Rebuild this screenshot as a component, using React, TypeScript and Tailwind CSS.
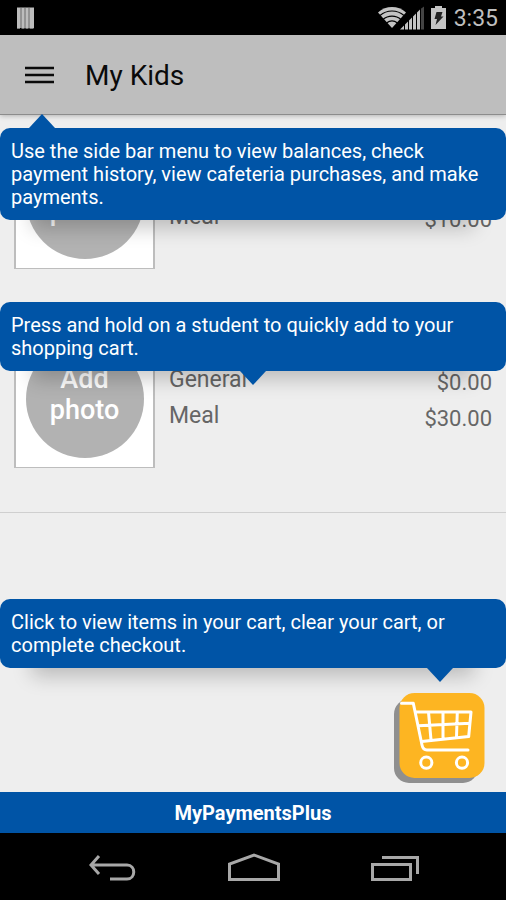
import type { ReactNode } from "react";
import clsx from "clsx";

interface Balance {
  label: string;
  amount: string;
}

interface Student {
  id: number;
  balances: Balance[];
}

const students: Student[] = [
  {
    id: 1,
    balances: [{ label: "Meal", amount: "$10.00" }],
  },
  {
    id: 2,
    balances: [
      { label: "General", amount: "$0.00" },
      { label: "Meal", amount: "$30.00" },
    ],
  },
];

function StatusBar() {
  return (
    <div className="h-[35px] bg-black flex items-center justify-between pl-4 pr-2 text-[#bebebe]">
      <svg width="19" height="22" viewBox="0 0 19 22" aria-hidden="true">
        <path d="M1 .5h17v20.500H1z" fill="#bdbdbd" />
        <path d="M5 1v20M9 1v20M13 1v20" stroke="#6a6a6a" strokeWidth="1" />
        <path d="M1 21.500h3M5.500 21.500h3M9.500 21.500h3M13.500 21.500h4" stroke="#777" strokeWidth="1" />
      </svg>

      <div className="flex items-center">
        {/* Wifi and signal strength */}
        <svg width="47" height="24" viewBox="0 0 47 24" aria-hidden="true">
          <path d="M0 6.500C8-.8 20-.8 28 6.500L14 22z" fill="#c4c4c4" />
          <path d="M2 9.500c7-6 17-6 24 0M5 13.500c5-4.500 13-4.500 18 0M8.500 17c3.500-2.800 7.500-2.800 11 0" fill="none" stroke="#000" strokeWidth="1.200" />
          <path d="M22 23.500 42.500 3v20.500z" fill="#c4c4c4" />
          <path d="M42.500 3 46 .5v23h-3.500z" fill="#444" />
          <path d="M26.500 17v7M30.500 13v11M34.500 9v15M38.500 5v19M42.500 2v22" stroke="#000" strokeWidth="1" />
        </svg>
        <svg width="15" height="23" viewBox="0 0 15 23" className="ml-1.5" aria-hidden="true">
          <path d="M4 0h7v2h4v21H0V2h4z" fill="#c4c4c4" />
          <path d="M5.500 6h6L10 10.500h2.500L4.500 19l1.500-6H3.500z" fill="#222" />
        </svg>
        <span className="ml-2 pt-0.5 text-[23px] leading-7">3:35</span>
      </div>
    </div>
  );
}

function StudentRow({ student }: { student: Student }) {
  return (
    <li className="flex gap-3.5 border-b border-[#cfcfcf] pt-[15px] pb-11 px-3.5">
      <button className="w-[141px] h-[139px] shrink-0 flex items-center justify-center pt-0.5 bg-white border-x-2 border-b border-[#bdbdbd]">
        <span className="size-[118px] rounded-full bg-[#b2b2b2] flex flex-col items-center pt-6 text-white text-[27px] leading-[31px] font-medium">
          <span>Add</span>
          <span>photo</span>
        </span>
      </button>
      <dl className="grow flex flex-col justify-end pb-[34px] leading-9 text-[#666]">
        {student.balances.map((balance) => (
          <div key={balance.label} className="flex justify-between">
            <dt className="text-[23px]">{balance.label}</dt>
            <dd className="pt-[3px] -mb-[3px] text-[22px]">{balance.amount}</dd>
          </div>
        ))}
      </dl>
    </li>
  );
}

interface TipProps {
  className: string;
  arrow: string;
  up?: boolean;
  children: ReactNode;
}

function Tip({ className, arrow, up = false, children }: TipProps) {
  return (
    <div role="tooltip" className={clsx("absolute inset-x-0", className)}>
      <div className="absolute inset-x-8 bottom-0 h-10 shadow-[0_8px_20px_rgba(0,0,0,0.22)]" />
      <p className="relative rounded-[10px] bg-[#0054a6] pt-3 pb-[11px] pl-[11px] pr-5 text-white text-[20px] leading-[23px]">
        {children}
      </p>
      <svg
        width="26"
        height="14"
        viewBox="0 0 26 14"
        className={clsx("absolute", up ? "bottom-full rotate-180" : "top-full", arrow)}
        aria-hidden="true"
      >
        <path d="M0 0h26L13 14z" fill="#0054a6" />
      </svg>
    </div>
  );
}

function CartIcon() {
  return (
    <svg width="91" height="90" viewBox="0 0 91 90" aria-hidden="true">
      <rect x="0" y="6" width="84" height="84" rx="15" fill="#8f8f8f" />
      <rect x="5.500" y="0" width="85" height="85" rx="15" fill="#fdb522" />
      <g fill="none" stroke="#fff" strokeWidth="3" strokeLinecap="round" strokeLinejoin="round">
        <path d="M7.500 10.200h11.800L28 52q1 5 5 5h41" />
        <path d="M22 19h55l-2.300 24.500-47 5M24.500 32.700l51.500-2.400M34.500 19l2.500 28M49 19v27M63.300 19l-.8 25" />
        <circle cx="32.300" cy="69.700" r="5.600" strokeWidth="3" />
        <circle cx="68" cy="69.700" r="5.600" strokeWidth="3" />
      </g>
    </svg>
  );
}

function NavBar() {
  return (
    <nav className="h-[67px] bg-black flex justify-between pl-[89px] pr-[87px] pt-5">
      <button aria-label="Back" className="h-7">
        <svg width="47" height="28" viewBox="0 0 47 28" fill="none" stroke="#a8a8a8" strokeWidth="3">
          <path d="M10 3 2 12l8 9M2 12h36c9 0 9 14 0 14H21" />
        </svg>
      </button>
      <button aria-label="Home" className="h-7">
        <svg width="52" height="28" viewBox="0 0 52 28" fill="none" stroke="#a8a8a8" strokeWidth="3">
          <path d="M1.500 26.500V11L26 2l24.500 9v15.500z" />
        </svg>
      </button>
      <button aria-label="Recent apps" className="h-7">
        <svg width="48" height="28" viewBox="0 0 48 28" fill="none" stroke="#a8a8a8" strokeWidth="3">
          <path d="M1.500 11.500h38v15h-38zM11 4.500h35.500V21" />
        </svg>
      </button>
    </nav>
  );
}

export default function App() {
  return (
    <div className="min-h-screen flex flex-col bg-[#eeeeee] font-['Roboto',sans-serif]">
      <StatusBar />

      <header className="relative h-20 flex items-center gap-[31px] pl-[25px] bg-[#bebebe] border-b border-[#8c8c8c] shadow-[0_1px_5px_rgba(0,0,0,0.25)]">
        <button aria-label="Menu" className="h-[18px]">
          <svg width="29" height="18" viewBox="0 0 29 18" stroke="#0a0a0a" strokeWidth="2.500">
            <path d="M0 2h29M0 9h29M0 16h29" />
          </svg>
        </button>
        <h1 className="pt-0.5 text-[28px] leading-8 text-[#0a0a0a]">My Kids</h1>
      </header>

      <main className="relative grow">
        <ul>
          {students.map((student) => (
            <StudentRow key={student.id} student={student} />
          ))}
        </ul>

        <Tip className="top-[13px]" arrow="left-[29px]" up>
          Use the side bar menu to view balances, check payment history, view cafeteria purchases, and make payments.
        </Tip>
        <Tip className="top-[187px]" arrow="left-1/2 -translate-x-1/2">
          Press and hold on a student to quickly add to your shopping cart.
        </Tip>
        <Tip className="bottom-[124px]" arrow="right-[53px]">
          Click to view items in your cart, clear your cart, or complete checkout.
        </Tip>

        <button aria-label="View cart" className="absolute right-[21px] bottom-[9px]">
          <CartIcon />
        </button>
      </main>

      <footer className="h-[41px] flex items-center justify-center bg-[#0054a6] text-white text-[20px] leading-6 font-bold">
        MyPaymentsPlus
      </footer>
      <NavBar />
    </div>
  );
}
